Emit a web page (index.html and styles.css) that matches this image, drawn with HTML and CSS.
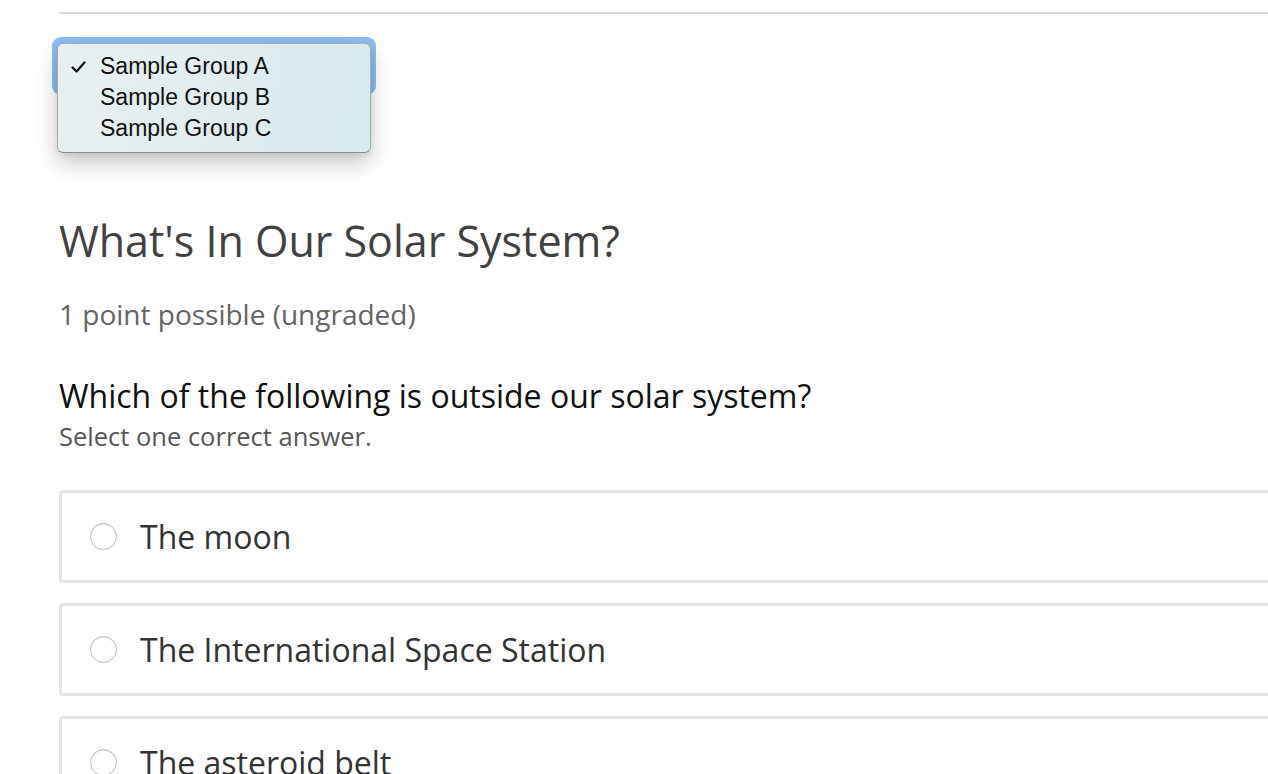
FILE: index.html
```html
<!DOCTYPE html>
<html lang="en">
<head>
<meta charset="utf-8">
<title>What's In Our Solar System?</title>
<link rel="stylesheet" href="styles.css">
</head>
<body>
<main class="page">
  <div class="rule"></div>
  <div class="select-wrap">
    <div class="select-focus"></div>
    <ul class="menu">
      <li class="menu-item selected"><span class="check"><svg width="15" height="12" viewBox="0 0 15 12"><polyline points="1.5,6.5 5.5,10.5 13.5,1.5" fill="none" stroke="#111" stroke-width="2.2" stroke-linecap="round" stroke-linejoin="round"/></svg></span>Sample Group A</li>
      <li class="menu-item"><span class="check"></span>Sample Group B</li>
      <li class="menu-item"><span class="check"></span>Sample Group C</li>
    </ul>
  </div>
  <h2 class="title">What's In Our Solar System?</h2>
  <p class="points">1 point possible (ungraded)</p>
  <p class="question">Which of the following is outside our solar system?</p>
  <p class="hint">Select one correct answer.</p>
  <div class="options">
    <label class="option"><span class="radio"></span><span class="option-text">The moon</span></label>
    <label class="option"><span class="radio"></span><span class="option-text">The International Space Station</span></label>
    <label class="option"><span class="radio"></span><span class="option-text">The asteroid belt</span></label>
  </div>
</main>
</body>
</html>
```
FILE: styles.css
```css
html, body {
  margin: 0;
  padding: 0;
  background: #fff;
  overflow: hidden;
}
body {
  font-family: "Open Sans", "Noto Sans", sans-serif;
  width: 1268px;
  height: 774px;
}
.page {
  padding-left: 59px;
  margin-right: -40px;
}
.rule {
  margin-top: 12px;
  height: 2px;
  background: #dcdcdc;
}
.select-wrap {
  position: relative;
  margin-top: 23px;
  margin-left: -7px;
  width: 324px;
  height: 58px;
}
.select-focus {
  width: 100%;
  height: 100%;
  border-radius: 9px;
  background: #8dbdf1;
}
.menu {
  position: absolute;
  left: 5px;
  top: 6px;
  width: 314px;
  height: 110px;
  margin: 0;
  padding: 7px 0 0 0;
  box-sizing: border-box;
  list-style: none;
  border: 1px solid #a9adb0;
  border-bottom-color: #8c8f92;
  border-radius: 6px;
  background: linear-gradient(100deg, #e9eff0 0%, #e1ecee 55%, #d8eaee 100%);
  box-shadow: 0 10px 22px rgba(0,0,0,0.22), 0 2px 5px rgba(0,0,0,0.08);
  font-family: "Liberation Sans", Arial, sans-serif;
  font-size: 23px;
  color: #111;
}
.menu-item {
  display: flex;
  align-items: center;
  height: 31px;
  line-height: 31px;
}
.check {
  width: 42px;
  padding-left: 13px;
  box-sizing: border-box;
  display: flex;
  align-items: center;
}
.title {
  margin: 120px 0 0 0;
  font-size: 43px;
  line-height: 52px;
  font-weight: 400;
  color: #414141;
}
.points {
  margin: 30px 0 0 0;
  font-size: 28px;
  line-height: 34px;
  color: #646464;
}
.question {
  margin: 46px 0 0 0;
  font-size: 32px;
  line-height: 38px;
  color: #111;
}
.hint {
  margin: 6px 0 0 0;
  font-size: 25.5px;
  line-height: 30px;
  color: #575757;
}
.options {
  margin-top: 39px;
  display: flex;
  flex-direction: column;
  gap: 20px;
}
.option {
  display: flex;
  align-items: center;
  height: 93px;
  box-sizing: border-box;
  border: 3px solid #e4e4e4;
  border-radius: 4px;
  padding-left: 28px;
}
.radio {
  width: 27px;
  height: 27px;
  box-sizing: border-box;
  border-radius: 50%;
  border: 1px solid #b9b9b9;
  background: radial-gradient(circle at 50% 60%, #ffffff 60%, #f1f1f1 100%);
  box-shadow: inset 0 1px 1px rgba(0,0,0,0.06);
  flex: none;
}
.option-text {
  margin-left: 23px;
  font-size: 32px;
  line-height: 38px;
  color: #333;
}
```
